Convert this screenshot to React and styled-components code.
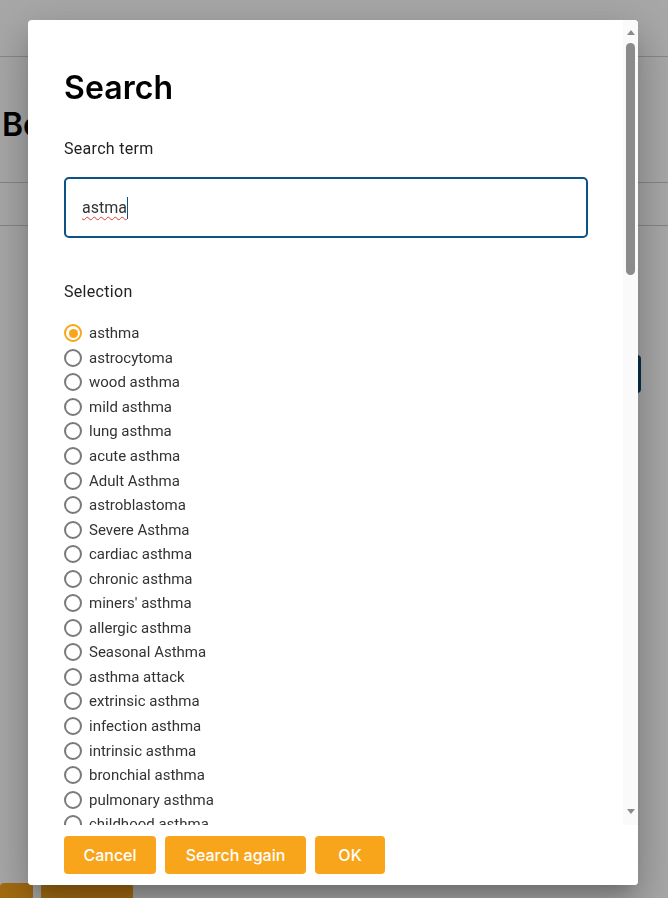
import React, { useState } from 'react';
import styled, { createGlobalStyle } from 'styled-components';

const GlobalStyle = createGlobalStyle`
    html, body {
        margin: 0;
        padding: 0;
        background: #ffffff;
        font-family: Roboto, "Liberation Sans", Arial, sans-serif;
        color: #222;
    }
    * {
        box-sizing: border-box;
    }
`;

const ORANGE = '#f9a51b';
const NAVY = '#0b5385';

const terms = [
    'asthma', 'astrocytoma', 'wood asthma', 'mild asthma', 'lung asthma',
    'acute asthma', 'Adult Asthma', 'astroblastoma', 'Severe Asthma', 'cardiac asthma',
    'chronic asthma', "miners' asthma", 'allergic asthma', 'Seasonal Asthma', 'asthma attack',
    'extrinsic asthma', 'infection asthma', 'intrinsic asthma', 'bronchial asthma', 'pulmonary asthma',
    'childhood asthma', 'nocturnal asthma', 'occupational asthma', 'exercise-induced asthma', 'atopic asthma',
    'non-allergic asthma', 'steroid-resistant asthma', 'brittle asthma', 'cough variant asthma', 'aspirin-induced asthma',
    'status asthmaticus', 'eosinophilic asthma', 'persistent asthma', 'intermittent asthma', 'moderate asthma',
    'uncontrolled asthma', 'difficult asthma', 'late-onset asthma', 'early-onset asthma', 'mixed asthma',
    'thymic asthma', "potters' asthma", "grinders' asthma", "millers' asthma", "bakers' asthma",
    'stable asthma', 'unstable asthma', 'acute severe asthma', 'life-threatening asthma', 'near-fatal asthma',
    'asthma exacerbation', 'asthma in pregnancy', 'asthma, unspecified', 'asthma control', 'asthma education',
    'asthma monitoring', 'asthma management', 'asthma review', 'asthmatic bronchitis', 'asthmatic attack',
    'pilocytic astrocytoma', 'anaplastic astrocytoma', 'diffuse astrocytoma', 'fibrillary astrocytoma', 'gemistocytic astrocytoma',
    'protoplasmic astrocytoma', 'cerebellar astrocytoma', 'spinal astrocytoma', 'Pediatric Asthma', 'Infant Asthma',
    'dust asthma', 'pollen asthma', 'humid asthma', 'cat asthma', 'horse asthma',
    'hay asthma', 'emotional asthma', 'reflex asthma', 'obesity asthma', 'sputum asthma',
    'wheezy bronchitis', 'asthmoid bronchitis', 'platinum asthma', 'isocyanate asthma', 'latex asthma',
    'grain asthma', 'cotton asthma', 'mushroom asthma', 'sulfite asthma', 'Allergic Asthma Attack',
];

// ---------- page behind the dialog ----------

const Page = styled.div`
    min-height: 898px;
    overflow: hidden;
`;

const TopBar = styled.header`
    height: 57px;
    border-bottom: 1px solid #cfcfcf;
    background: #ffffff;
`;

const PageMain = styled.main`
    display: flex;
    flex-direction: column;
    padding-left: 2px;
`;

const PageTitle = styled.h1`
    margin: 48px 0 0;
    font-family: Inter, "Noto Sans", sans-serif;
    font-weight: 600;
    font-size: 32px;
    line-height: 40px;
    color: #000;
    white-space: nowrap;
`;

const Divider = styled.div`
    height: 1px;
    background: #cccccc;
    margin-top: ${p => p.$gap}px;
    margin-left: -2px;
`;

const ActionRow = styled.div`
    display: flex;
    justify-content: flex-end;
    padding-right: 27px;
    margin-top: 129px;
`;

const NavyButton = styled.button`
    height: 38px;
    width: 110px;
    border: 0;
    border-radius: 4px;
    background: #0b4a6e;
    color: #fff;
`;

const PageButtons = styled.div`
    display: flex;
    gap: 8px;
    margin-top: 490px;
    margin-left: -2px;
`;

const GoldButton = styled.button`
    height: 38px;
    width: ${p => p.$w}px;
    border: 0;
    border-radius: 4px;
    background: ${ORANGE};
`;

// ---------- dialog ----------

const Backdrop = styled.div`
    position: fixed;
    inset: 0;
    background: rgba(0, 0, 0, 0.34);
`;

const Dialog = styled.div`
    position: fixed;
    left: 28px;
    top: 20px;
    width: 610px;
    height: 865px;
    display: flex;
    flex-direction: column;
    background: #fff;
    border-radius: 4px;
    overflow: hidden;
    box-shadow: 0 11px 15px -7px rgba(0, 0, 0, 0.2),
        0 24px 38px 3px rgba(0, 0, 0, 0.14),
        0 9px 46px 8px rgba(0, 0, 0, 0.12);
`;

const DialogBody = styled.div`
    flex: 1;
    min-height: 0;
    display: flex;
`;

const BodyContent = styled.div`
    flex: 1;
    min-width: 0;
    overflow: hidden;
    padding: 48px 35px 20px 36px;
`;

// scrollbar rail drawn beside the content
const ScrollRail = styled.div`
    flex: none;
    width: 15px;
    display: flex;
    flex-direction: column;
    background: #fafafa;
`;

const RailArrow = styled.div`
    height: 20px;
    display: flex;
    justify-content: center;
    align-items: ${p => (p.$down ? 'flex-start' : 'flex-end')};
    padding: ${p => (p.$down ? '4px 0 0' : '0 0 5px')};

    &::before {
        content: '';
        width: 0;
        height: 0;
        border-left: 4px solid transparent;
        border-right: 4px solid transparent;
        ${p => (p.$down ? 'border-top: 5px solid #8b8b8b;' : 'border-bottom: 5px solid #8b8b8b;')}
    }
`;

const RailTrack = styled.div`
    flex: 1;
    padding: 3px 3px 0;
`;

const RailThumb = styled.div`
    height: 232px;
    border-radius: 5px;
    background: #8b8b8b;
`;

const Title = styled.h2`
    margin: 0;
    font-family: Inter, "Noto Sans", sans-serif;
    font-weight: 600;
    font-size: 32px;
    line-height: 40px;
    letter-spacing: 0.1px;
    color: #000;
`;

const FieldLabel = styled.div`
    margin-top: ${p => p.$gap}px;
    font-size: 16px;
    line-height: 24px;
    letter-spacing: 0.3px;
    color: #222;
`;

const SearchField = styled.div`
    margin-top: 16px;
    height: 61px;
    border: 2px solid ${NAVY};
    border-radius: 5px;
    padding: 0 16px;
    display: flex;
    align-items: center;
    font-size: 16px;
    color: #333;
`;

const Misspelled = styled.span`
    text-decoration: underline wavy #e53935;
    text-decoration-thickness: 1px;
    text-underline-offset: 3px;
`;

const Caret = styled.span`
    display: inline-block;
    width: 1px;
    height: 22px;
    background: ${NAVY};
`;

const RadioList = styled.div`
    margin-top: 17px;
    display: flex;
    flex-direction: column;
`;

const RadioRow = styled.label`
    height: 24.55px;
    display: flex;
    align-items: center;
    gap: 7px;
    font-size: 15px;
    color: #333;
    cursor: pointer;
    white-space: nowrap;
`;

const RadioMark = styled.span`
    width: 18px;
    height: 18px;
    flex: none;
    border-radius: 50%;
    border: 2px solid ${p => (p.$checked ? ORANGE : '#7a7a7a')};
    display: flex;
    align-items: center;
    justify-content: center;

    &::after {
        content: '';
        width: 9px;
        height: 9px;
        border-radius: 50%;
        background: ${p => (p.$checked ? ORANGE : 'transparent')};
    }
`;

const DialogFooter = styled.div`
    flex: none;
    height: 60px;
    padding: 11px 36px;
    display: flex;
    gap: 9px;
    background: #fff;
`;

const ActionButton = styled.button`
    height: 38px;
    width: ${p => p.$w}px;
    padding: 0;
    border: 0;
    border-radius: 4px;
    background: ${ORANGE};
    color: #fff;
    font-family: Inter, "Noto Sans", sans-serif;
    font-weight: 500;
    font-size: 16px;
    cursor: pointer;
`;

const App = () => {
    const [selected, setSelected] = useState(terms[0]);

    return (
        <>
            <GlobalStyle />
            <Page>
                <TopBar />
                <PageMain>
                    <PageTitle>Behandelplan</PageTitle>
                    <Divider $gap={37} />
                    <Divider $gap={42} />
                    <ActionRow>
                        <NavyButton />
                    </ActionRow>
                    <PageButtons>
                        <GoldButton $w={33} />
                        <GoldButton $w={92} />
                    </PageButtons>
                </PageMain>
            </Page>

            <Backdrop />
            <Dialog role="dialog">
                <DialogBody>
                    <BodyContent>
                        <Title>Search</Title>
                        <FieldLabel $gap={29}>Search term</FieldLabel>
                        <SearchField>
                            <Misspelled>astma</Misspelled>
                            <Caret />
                        </SearchField>
                        <FieldLabel $gap={42}>Selection</FieldLabel>
                        <RadioList>
                            {terms.map(t => (
                                <RadioRow key={t} onClick={() => setSelected(t)}>
                                    <RadioMark $checked={selected === t} />
                                    {t}
                                </RadioRow>
                            ))}
                        </RadioList>
                    </BodyContent>
                    <ScrollRail>
                        <RailArrow />
                        <RailTrack>
                            <RailThumb />
                        </RailTrack>
                        <RailArrow $down />
                    </ScrollRail>
                </DialogBody>
                <DialogFooter>
                    <ActionButton $w={92}>Cancel</ActionButton>
                    <ActionButton $w={141}>Search again</ActionButton>
                    <ActionButton $w={70}>OK</ActionButton>
                </DialogFooter>
            </Dialog>
        </>
    );
};

export default App;
